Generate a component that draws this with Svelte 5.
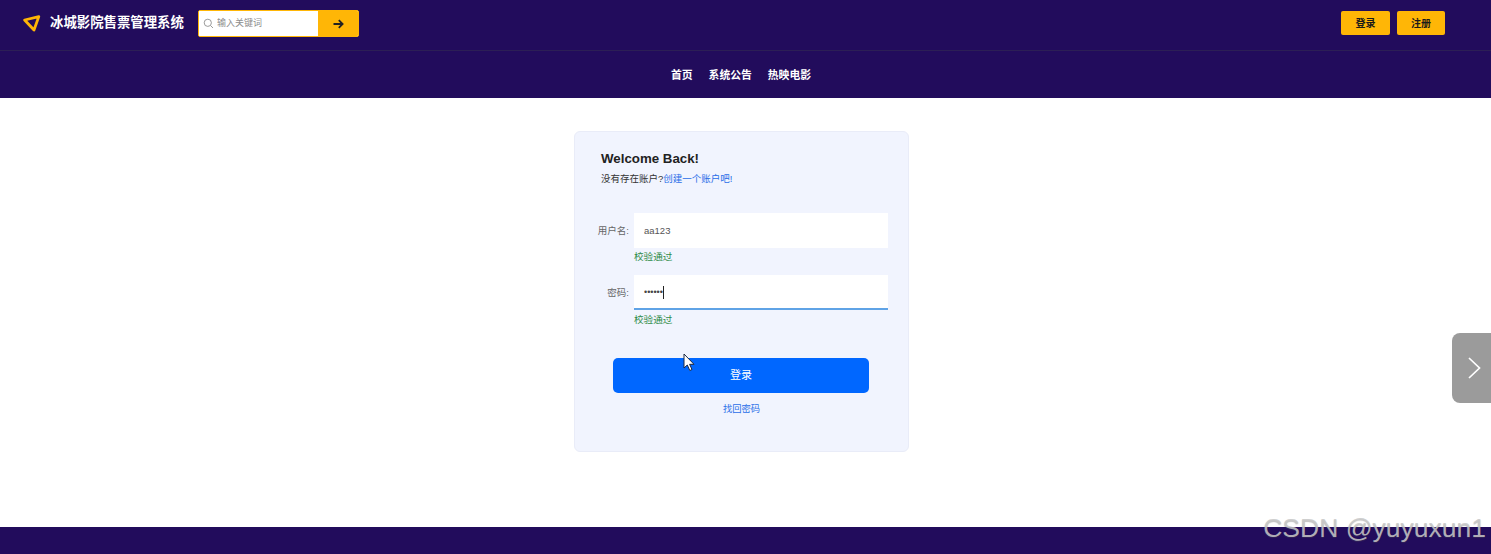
<script lang="ts">
  const navLinks = ["首页", "系统公告", "热映电影"];
  let username = "aa123";
  let password = "123456";
</script>

<div class="page">
  <header class="topbar">
    <div class="brand">
      <svg class="logo" width="20" height="19" viewBox="0 0 20 19" fill="none">
        <path d="M2.6 6 L16.8 2.6 L12 16 Z" stroke="#ffb606" stroke-width="2.8" stroke-linejoin="round" />
        <path d="M8.5 7.4 L12.2 6.4 L11 10.2 Z" fill="#220c5c" stroke="#220c5c" stroke-width="0.5" />
      </svg>
      <span class="brand-name">冰城影院售票管理系统</span>
    </div>
    <form class="search" on:submit|preventDefault>
      <svg class="search-icon" width="11" height="11" viewBox="0 0 11 11" fill="none">
        <circle cx="4.8" cy="4.8" r="3.6" stroke="#9a9a9a" stroke-width="1" />
        <path d="M7.5 7.5 L10 10" stroke="#9a9a9a" stroke-width="1" />
      </svg>
      <input type="text" placeholder="输入关键词" />
      <button type="submit" aria-label="搜索">
        <svg width="11" height="10" viewBox="0 0 11 10" fill="none">
          <path d="M0.5 5 H9.5 M5.8 1.2 L9.6 5 L5.8 8.8" stroke="#222" stroke-width="1.8" />
        </svg>
      </button>
    </form>
    <div class="auth">
      <button>登录</button>
      <button>注册</button>
    </div>
  </header>

  <nav class="mainnav">
    {#each navLinks as link}
      <a href="#/">{link}</a>
    {/each}
  </nav>

  <main>
    <section class="card">
      <h2>Welcome Back!</h2>
      <p class="sub">没有存在账户?<a href="#/">创建一个账户吧!</a></p>

      <div class="field first">
        <label for="user">用户名:</label>
        <input id="user" type="text" bind:value={username} />
      </div>
      <div class="ok gap">校验通过</div>

      <div class="field">
        <label for="pass">密码:</label>
        <div class="pass-wrap">
          <input id="pass" class="focused" type="password" bind:value={password} />
          <span class="caret"></span>
        </div>
      </div>
      <div class="ok second">校验通过</div>

      <button class="submit">登录</button>
      <a class="forgot" href="#/">找回密码</a>
    </section>
  </main>

  <footer></footer>

  <button class="side-tab" aria-label="展开">
    <svg width="14" height="24" viewBox="0 0 14 24" fill="none">
      <path d="M2 2 L12.5 12 L2 22" stroke="#fff" stroke-width="1.7" />
    </svg>
  </button>

  <svg class="cursor" width="13" height="19" viewBox="0 0 13 19">
    <path d="M1 1 V15 L4.3 12 L6.8 17.5 L9 16.5 L6.6 11.3 H11 Z" fill="#fff" stroke="#1c2a44" stroke-width="1" />
  </svg>

  <span class="watermark">CSDN @yuyuxun1</span>
</div>

<style>
  :global(body) {
    margin: 0;
    background: #fff;
  }

  * {
    box-sizing: border-box;
  }

  .page {
    position: relative;
    width: 1491px;
    height: 554px;
    overflow: hidden;
    display: flex;
    flex-direction: column;
    font-family: "Liberation Sans", "Noto Sans CJK SC", sans-serif;
    background: #fff;
  }

  .topbar {
    height: 51px;
    flex: none;
    display: flex;
    align-items: center;
    padding: 0 46px 4px 22px;
    background: #220c5c;
    border-bottom: 1px solid #2c1f55;
  }

  .brand {
    display: flex;
    align-items: center;
    gap: 8px;
  }

  .logo {
    display: block;
  }

  .brand-name {
    font-size: 13.4px;
    line-height: 16px;
    padding-bottom: 1px;
    font-weight: 700;
    color: #fff;
    white-space: nowrap;
    width: 135px;
  }

  .search {
    position: relative;
    display: flex;
    margin-left: 13px;
    width: 161px;
    height: 27px;
    border: 1px solid #ffb606;
    border-radius: 2px;
    overflow: hidden;
    background: #fff;
  }

  .search-icon {
    position: absolute;
    left: 4px;
    top: 7px;
  }

  .search input {
    width: 119px;
    border: none;
    outline: none;
    padding: 0 0 0 18px;
    font: 9px "Liberation Sans", "Noto Sans CJK SC", sans-serif;
    background: #fff;
  }

  .search input::placeholder {
    color: #8d8d8d;
    opacity: 1;
  }

  .search button {
    flex: 1;
    border: none;
    padding: 2px 0 0 1px;
    background: #ffb606;
  }

  .auth {
    margin-left: auto;
    display: flex;
    gap: 7px;
  }

  .auth button {
    width: 49px;
    height: 24px;
    padding: 0 0 1px;
    border: none;
    border-radius: 2px;
    background: #ffb606;
    color: #1a1a1a;
    font: 700 10px "Liberation Sans", "Noto Sans CJK SC", sans-serif;
  }

  .auth button:last-child {
    width: 48px;
  }

  .mainnav {
    height: 47px;
    flex: none;
    display: flex;
    justify-content: center;
    align-items: center;
    gap: 16px;
    padding: 0 9px 2px 0;
    background: #220c5c;
  }

  .mainnav a {
    color: #fff;
    font-size: 10.8px;
    font-weight: 700;
    text-decoration: none;
  }

  main {
    flex: 1;
    display: flex;
    justify-content: center;
    padding: 33px 8px 0 0;
  }

  .card {
    width: 335px;
    height: 321px;
    padding-top: 19px;
    display: flex;
    flex-direction: column;
    background: #f1f4fe;
    border: 1px solid #e9ecf8;
    border-radius: 6px;
  }

  h2 {
    margin: 0 0 0 26px;
    font-size: 13.3px;
    line-height: 15px;
    font-weight: 700;
    color: #222;
  }

  .sub {
    margin: 7px 0 0 26px;
    font-size: 9.5px;
    line-height: 12px;
    color: #333;
  }

  .sub a {
    color: #2a6fe8;
    text-decoration: none;
  }

  .field {
    display: flex;
    align-items: center;
    gap: 5px;
  }

  .field.first {
    margin-top: 28px;
  }

  .field label {
    width: 54px;
    padding-bottom: 2px;
    text-align: right;
    font-size: 9.5px;
    color: #666;
  }

  .field input {
    display: block;
    width: 254px;
    height: 35px;
    padding: 0 10px;
    border: none;
    outline: none;
    background: #fff;
    color: #555;
    font: 9.5px "Liberation Sans", "Noto Sans CJK SC", sans-serif;
  }

  .field input.focused {
    border-bottom: 2px solid #5fa3e6;
    color: #444;
    font-size: 9px;
  }

  .pass-wrap {
    position: relative;
  }

  .caret {
    position: absolute;
    left: 29px;
    top: 11px;
    width: 1px;
    height: 13px;
    background: #222;
  }

  .ok {
    margin: 2px 0 0 59px;
    font-size: 9.6px;
    line-height: 13px;
    color: #2e8b47;
  }

  .ok.gap {
    margin-bottom: 12px;
  }

  .ok.second {
    margin-top: 3px;
  }

  .submit {
    align-self: flex-start;
    width: 256px;
    height: 35px;
    margin: 32px 0 0 38px;
    padding: 0 0 4px;
    border: none;
    border-radius: 5px;
    background: #0067ff;
    color: #fff;
    font: 11px "Liberation Sans", "Noto Sans CJK SC", sans-serif;
  }

  .forgot {
    align-self: center;
    margin-top: 10px;
    font-size: 9.3px;
    line-height: 13px;
    color: #2a6fe8;
    text-decoration: none;
  }

  footer {
    height: 27px;
    flex: none;
    background: #220c5c;
  }

  .side-tab {
    position: absolute;
    left: 1452px;
    top: 333px;
    width: 39px;
    height: 70px;
    padding: 0 0 0 5px;
    border: none;
    border-radius: 8px 0 0 8px;
    background: #9b9b9b;
    display: flex;
    align-items: center;
    justify-content: center;
  }

  .cursor {
    position: absolute;
    left: 683px;
    top: 353px;
  }

  .watermark {
    position: absolute;
    right: 5px;
    top: 513px;
    font-size: 26.5px;
    line-height: 30px;
    color: rgba(200, 200, 200, 0.85);
    text-shadow: 0 1px 1px rgba(80, 80, 80, 0.35);
    white-space: nowrap;
  }
</style>
